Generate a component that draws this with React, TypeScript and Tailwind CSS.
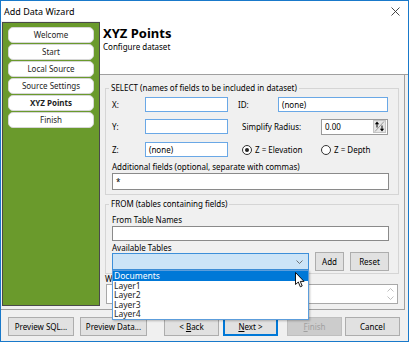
import React from 'react'

const navItems = ['Welcome', 'Start', 'Local Source', 'Source Settings', 'XYZ Points', 'Finish']
const tables = ['Documents', 'Layer1', 'Layer2', 'Layer3', 'Layer4']

function NavPill({ label, active }: { label: string; active?: boolean }) {
  return (
    <div
      className={`flex h-[16px] w-[86px] items-center justify-center rounded-[5px] border border-[#d6d6d6] bg-white text-[8px] leading-none text-[#1e1e1e] ${
        active ? 'font-bold' : ''
      }`}
    >
      {label}
    </div>
  )
}

// text box with blue (focused look) or gray border
function Field({ value, className }: { value?: string; className: string }) {
  return (
    <div className={`flex items-center border bg-white px-[3px] leading-none ${className}`}>{value}</div>
  )
}

function Radio({ label, checked }: { label: string; checked?: boolean }) {
  return (
    <div className="flex items-center gap-[3px]">
      <div className="flex h-[10px] w-[10px] items-center justify-center rounded-full border border-[#333] bg-white">
        {checked && <div className="h-[4px] w-[4px] rounded-full bg-[#222]" />}
      </div>
      <span>{label}</span>
    </div>
  )
}

function GroupBox({ title, className, children }: { title: string; className: string; children: React.ReactNode }) {
  return (
    <div className={`relative w-[294px] border border-[#d5d5d5] pl-[6px] ${className}`}>
      <span className="absolute left-[3px] top-[-6px] bg-[#f0f0f0] px-[2px] leading-[10px]">{title}</span>
      {children}
    </div>
  )
}

function WizButton({ children, className }: { children: React.ReactNode; className: string }) {
  return (
    <div className={`flex h-[19px] items-center justify-center border text-[8px] leading-none ${className}`}>
      {children}
    </div>
  )
}

export default function App() {
  return (
    <div className="flex h-[342px] w-[409px] flex-col overflow-hidden border border-[#1979ca] bg-[#f0f0f0] font-['Noto_Sans',sans-serif] text-[8px] text-black">
      {/* title bar */}
      <div className="flex h-[20px] shrink-0 items-center justify-between bg-white pl-[3px] pr-[8px]">
        <span className="text-[9px] leading-none">Add Data Wizard</span>
        <svg width="9" height="9" viewBox="0 0 9 9">
          <path d="M0.5 0.5 L8.5 8.5 M8.5 0.5 L0.5 8.5" stroke="#333" strokeWidth="0.9" />
        </svg>
      </div>

      <div className="flex h-[289px] shrink-0">
        {/* step list */}
        <div className="w-[99px] shrink-0 border-b border-[#a0a0a0] pl-[1px] pt-[1px]">
          <div className="flex h-[284px] w-[98px] flex-col gap-[1px] border border-[#4a4a4a] bg-[#6a9a2c] pl-[5px] pt-[4px]">
            {navItems.map((n) => (
              <NavPill key={n} label={n} active={n === 'XYZ Points'} />
            ))}
          </div>
        </div>

        <div className="flex flex-1 flex-col">
          <div className="h-[54px] shrink-0 border-b border-[#a0a0a0] bg-white pl-[3px] pt-[5px]">
            <div className="text-[13px] font-bold leading-[15px]">XYZ Points</div>
            <div className="mt-[1px] leading-[10px]">Configure dataset</div>
          </div>

          <div className="mr-[3px] flex-1 border-b border-r border-[#a0a0a0] pl-[5px] pt-[13px]">
            <GroupBox title="SELECT (names of fields to be included in dataset)" className="h-[107px] pt-[8px]">
              <div className="flex h-[15px] items-center">
                <span className="w-[33px]">X:</span>
                <Field className="h-full w-[83px] border-[#6aa8e6]" />
                <span className="ml-[10px] w-[40px]">ID:</span>
                <Field value="(none)" className="h-full w-[110px] border-[#6aa8e6]" />
              </div>
              <div className="mt-[7px] flex h-[15px] items-center">
                <span className="w-[33px]">Y:</span>
                <Field className="h-full w-[83px] border-[#6aa8e6]" />
                <span className="ml-[14px] w-[79px]">Simplify Radius:</span>
                <div className="flex h-[16px] w-[67px] items-center justify-between border border-[#9a9a9a] bg-white pl-[3px] pr-[1px]">
                  <span>0.00</span>
                  <div className="flex h-[13px] w-[13px] items-center justify-center border border-[#c4c4c4] bg-[#e6e6e6]">
                    <svg width="11" height="11" viewBox="0 0 11 11">
                      <path d="M1 10.5 L10 0.5" stroke="#8a8a8a" strokeWidth="0.8" />
                      <path d="M3 2 L3 6.5" stroke="#000" strokeWidth="1" />
                      <path d="M0.8 3.2 L3 0.6 L5.2 3.2 Z" fill="#000" />
                      <path d="M8 4.5 L8 9" stroke="#000" strokeWidth="1" />
                      <path d="M5.8 7.8 L8 10.4 L10.2 7.8 Z" fill="#000" />
                    </svg>
                  </div>
                </div>
              </div>
              <div className="mt-[8px] flex h-[15px] items-center">
                <span className="w-[33px]">Z:</span>
                <Field value="(none)" className="h-full w-[83px] border-[#6aa8e6]" />
                <div className="ml-[14px] w-[79px]">
                  <Radio label="Z = Elevation" checked />
                </div>
                <Radio label="Z = Depth" />
              </div>
              <div className="mt-[5px] leading-[10px]">Additional fields (optional, separate with commas)</div>
              <Field value="*" className="mt-[1px] h-[17px] w-[277px] border-[#8a8a8a]" />
            </GroupBox>

            <GroupBox title="FROM (tables containing fields)" className="mt-[9px] h-[70px] pt-[10px]">
              <div className="leading-[10px]">From Table Names</div>
              <Field className="mt-[1px] h-[15px] w-[277px] border-[#8a8a8a]" />
              <div className="mt-[2px] leading-[10px]">Available Tables</div>
              <div className="flex h-[17px] items-center">
                <div className="relative z-10 h-full w-[197px]">
                  <div className="flex h-full items-center justify-end border border-[#3d8fd9] bg-[#cce4f7] pr-[5px]">
                    <svg width="7" height="4" viewBox="0 0 7 4">
                      <path d="M0.5 0.5 L3.5 3.5 L6.5 0.5" stroke="#555" fill="none" strokeWidth="0.8" />
                    </svg>
                  </div>
                  <div className="absolute left-0 top-full w-full border border-[#5c9ddb] bg-white shadow-[1px_1px_2px_rgba(0,0,0,0.25)]">
                    {tables.map((t, i) => (
                      <div
                        key={t}
                        className={`h-[9.6px] px-[1px] text-[8.5px] leading-[9.6px] ${
                          i === 0 ? 'bg-[#0078d7] text-white' : 'text-[#1e1e1e]'
                        }`}
                      >
                        {t}
                      </div>
                    ))}
                  </div>
                  {/* mouse pointer */}
                  <svg className="absolute left-[183px] top-[19px]" width="10" height="16" viewBox="0 0 10 16">
                    <path
                      d="M0.5 0.5 L0.5 12.5 L3.3 10 L5.3 14.8 L7.2 14 L5.3 9.4 L9 9.4 Z"
                      fill="#fff"
                      stroke="#000"
                      strokeWidth="0.9"
                      strokeLinejoin="round"
                    />
                  </svg>
                </div>
                <WizButton className="ml-[6px] h-[17px] w-[29px] border-[#adadad] bg-[#e1e1e1]">Add</WizButton>
                <WizButton className="ml-[6px] h-[17px] w-[39px] border-[#adadad] bg-[#e1e1e1]">Reset</WizButton>
              </div>
            </GroupBox>

            <div className="leading-[10px]">Where</div>
            <div className="ml-[1px] flex h-[20px] w-[292px] justify-end border border-[#a8a8a8] bg-white pr-[3px]">
              <div className="flex flex-col justify-between py-[3px]">
                <svg width="7" height="4" viewBox="0 0 7 4">
                  <path d="M0.5 3.5 L3.5 0.5 L6.5 3.5" stroke="#b0b0b0" fill="none" strokeWidth="0.8" />
                </svg>
                <svg width="7" height="4" viewBox="0 0 7 4">
                  <path d="M0.5 0.5 L3.5 3.5 L6.5 0.5" stroke="#b0b0b0" fill="none" strokeWidth="0.8" />
                </svg>
              </div>
            </div>
          </div>
        </div>
      </div>

      {/* wizard buttons */}
      <div className="flex flex-1 items-start pl-[7px] pt-[7px]">
        <WizButton className="w-[66px] border-[#adadad] bg-[#e1e1e1]">Preview SQL...</WizButton>
        <WizButton className="ml-[6px] w-[67px] border-[#adadad] bg-[#e1e1e1]">Preview Data...</WizButton>
        <WizButton className="ml-[17px] w-[55px] border-[#adadad] bg-[#e1e1e1]">
          &lt;&nbsp;<span className="underline">B</span>ack
        </WizButton>
        <WizButton className="ml-[4px] w-[55px] border-[#0078d7] bg-[#e1e1e1] shadow-[inset_0_0_0_1px_#0078d7]">
          <span className="underline">N</span>ext &gt;
        </WizButton>
        <WizButton className="ml-[9px] w-[55px] border-[#bfbfbf] bg-[#cccccc] text-[#a0a0a0]">
          <span className="underline">F</span>inish
        </WizButton>
        <WizButton className="ml-[3px] w-[55px] border-[#adadad] bg-[#e1e1e1]">Cancel</WizButton>
      </div>
    </div>
  )
}
